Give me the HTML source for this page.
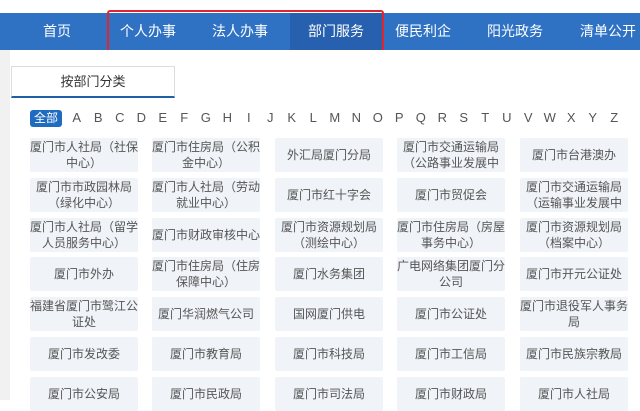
<!DOCTYPE html>
<html><head><meta charset="utf-8"><style>
*{margin:0;padding:0;box-sizing:border-box}
body{width:640px;height:400px;overflow:hidden;background:#fff;font-family:"Liberation Sans","Noto Sans CJK SC",sans-serif;position:relative}
.nav{position:absolute;left:0;top:13px;width:640px;height:37px;background:#2f72c4}
.nav span{position:absolute;top:0;height:37px;line-height:37px;color:#fff;font-size:14px;width:92px;text-align:center;transform:translateX(-50%)}
.act{background:#2660ae}
.red{position:absolute;left:107px;top:10px;width:277px;height:44px;border:2px solid #e0262b;border-radius:3px}
.gray{position:absolute;left:0;top:50px;width:640px;height:350px;background:#f1f1f1}
.panel{position:absolute;left:10px;top:50px;width:630px;height:350px;background:#fff}
.tab{position:absolute;left:11px;top:66px;width:164px;height:32px;border:1px solid #ddd;border-bottom:2px solid #1f5fa8;text-align:center;line-height:30px;font-size:13px;color:#333}
.letters{position:absolute;left:30px;top:110px;font-size:13px;color:#555;white-space:nowrap}
.letters b{display:inline-block;background:#1f6bbf;color:#fff;font-weight:normal;font-size:12px;padding:0 4px;border-radius:3px;height:17px;line-height:17px;margin-right:4px}
.letters i{font-style:normal;display:inline-block;width:21.5px;text-align:center}
.c{position:absolute;width:108px;height:34px;background:#f0f3f8;color:#555;font-size:12px;line-height:16px;text-align:center;display:flex;align-items:center;justify-content:center;padding:0;border-radius:2px;overflow:hidden}
.c.o{overflow:visible}
</style></head><body>
<div class="nav">
<span style="left:57px">首页</span>
<span style="left:148px">个人办事</span>
<span style="left:240px">法人办事</span>
<span class="act" style="left:336px">部门服务</span>
<span style="left:423px">便民利企</span>
<span style="left:515px">阳光政务</span>
<span style="left:608px">清单公开</span>
</div>
<div class="red"></div>
<div class="gray"></div>
<div class="panel"></div>
<div class="tab">按部门分类</div>
<div class="letters"><b>全部</b><i>A</i><i>B</i><i>C</i><i>D</i><i>E</i><i>F</i><i>G</i><i>H</i><i>I</i><i>J</i><i>K</i><i>L</i><i>M</i><i>N</i><i>O</i><i>P</i><i>Q</i><i>R</i><i>S</i><i>T</i><i>U</i><i>V</i><i>W</i><i>X</i><i>Y</i><i>Z</i></div>

<div class="c" style="left:30px;top:138px">厦门市人社局（社保中心）</div>
<div class="c" style="left:152px;top:138px">厦门市住房局（公积金中心）</div>
<div class="c" style="left:275px;top:138px">外汇局厦门分局</div>
<div class="c" style="left:397px;top:138px">厦门市交通运输局（公路事业发展中</div>
<div class="c" style="left:520px;top:138px">厦门市台港澳办</div>

<div class="c" style="left:30px;top:178px">厦门市市政园林局（绿化中心）</div>
<div class="c" style="left:152px;top:178px">厦门市人社局（劳动就业中心）</div>
<div class="c" style="left:275px;top:178px">厦门市红十字会</div>
<div class="c" style="left:397px;top:178px">厦门市贸促会</div>
<div class="c" style="left:520px;top:178px">厦门市交通运输局（运输事业发展中</div>

<div class="c" style="left:30px;top:218px">厦门市人社局（留学人员服务中心）</div>
<div class="c" style="left:152px;top:218px">厦门市财政审核中心</div>
<div class="c" style="left:275px;top:218px">厦门市资源规划局（测绘中心）</div>
<div class="c" style="left:397px;top:218px">厦门市住房局（房屋事务中心）</div>
<div class="c" style="left:520px;top:218px">厦门市资源规划局（档案中心）</div>

<div class="c" style="left:30px;top:257px">厦门市外办</div>
<div class="c" style="left:152px;top:257px">厦门市住房局（住房保障中心）</div>
<div class="c" style="left:275px;top:257px">厦门水务集团</div>
<div class="c" style="left:397px;top:257px">广电网络集团厦门分公司</div>
<div class="c" style="left:520px;top:257px">厦门市开元公证处</div>

<div class="c" style="left:30px;top:297px">福建省厦门市鹭江公证处</div>
<div class="c" style="left:152px;top:297px">厦门华润燃气公司</div>
<div class="c" style="left:275px;top:297px">国网厦门供电</div>
<div class="c" style="left:397px;top:297px">厦门市公证处</div>
<div class="c" style="left:520px;top:297px">厦门市退役军人事务局</div>

<div class="c" style="left:30px;top:337px">厦门市发改委</div>
<div class="c" style="left:152px;top:337px">厦门市教育局</div>
<div class="c" style="left:275px;top:337px">厦门市科技局</div>
<div class="c" style="left:397px;top:337px">厦门市工信局</div>
<div class="c" style="left:520px;top:337px">厦门市民族宗教局</div>

<div class="c" style="left:30px;top:377px">厦门市公安局</div>
<div class="c" style="left:152px;top:377px">厦门市民政局</div>
<div class="c" style="left:275px;top:377px">厦门市司法局</div>
<div class="c" style="left:397px;top:377px">厦门市财政局</div>
<div class="c" style="left:520px;top:377px">厦门市人社局</div>
</body></html>
